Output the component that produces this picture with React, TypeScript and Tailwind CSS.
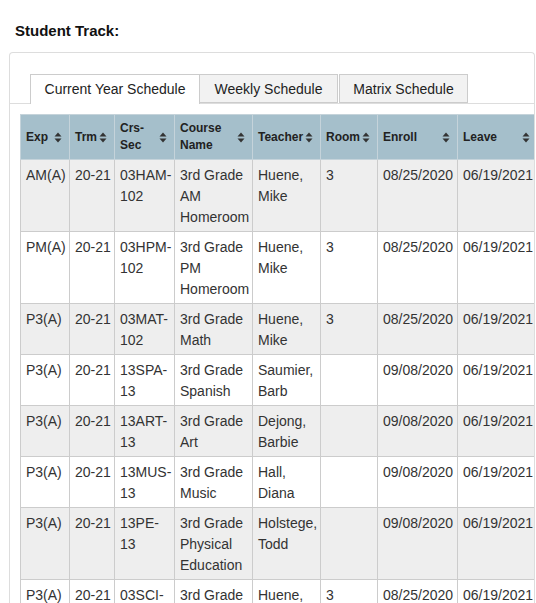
import React from "react";

type Row = {
  exp: string;
  trm: string;
  crs: string;
  course: string;
  teacher: string;
  room: string;
  enroll: string;
  leave: string;
};

const rows: Row[] = [
  { exp: "AM(A)", trm: "20-21", crs: "03HAM-102", course: "3rd Grade AM Homeroom", teacher: "Huene, Mike", room: "3", enroll: "08/25/2020", leave: "06/19/2021" },
  { exp: "PM(A)", trm: "20-21", crs: "03HPM-102", course: "3rd Grade PM Homeroom", teacher: "Huene, Mike", room: "3", enroll: "08/25/2020", leave: "06/19/2021" },
  { exp: "P3(A)", trm: "20-21", crs: "03MAT-102", course: "3rd Grade Math", teacher: "Huene, Mike", room: "3", enroll: "08/25/2020", leave: "06/19/2021" },
  { exp: "P3(A)", trm: "20-21", crs: "13SPA-13", course: "3rd Grade Spanish", teacher: "Saumier, Barb", room: "", enroll: "09/08/2020", leave: "06/19/2021" },
  { exp: "P3(A)", trm: "20-21", crs: "13ART-13", course: "3rd Grade Art", teacher: "Dejong, Barbie", room: "", enroll: "09/08/2020", leave: "06/19/2021" },
  { exp: "P3(A)", trm: "20-21", crs: "13MUS-13", course: "3rd Grade Music", teacher: "Hall, Diana", room: "", enroll: "09/08/2020", leave: "06/19/2021" },
  { exp: "P3(A)", trm: "20-21", crs: "13PE-13", course: "3rd Grade Physical Education", teacher: "Holstege, Todd", room: "", enroll: "09/08/2020", leave: "06/19/2021" },
  { exp: "P3(A)", trm: "20-21", crs: "03SCI-102", course: "3rd Grade Science", teacher: "Huene, Mike", room: "3", enroll: "08/25/2020", leave: "06/19/2021" },
];

function SortIcon() {
  return (
    <svg width="8" height="11" viewBox="0 0 8 11" className="shrink-0">
      <path d="M4 0.5 L7.5 4.5 L0.5 4.5 Z" fill="#333" />
      <path d="M4 10.5 L7.5 6.5 L0.5 6.5 Z" fill="#333" />
    </svg>
  );
}

const headers: { label: React.ReactNode; w: string }[] = [
  { label: "Exp", w: "w-[49px]" },
  { label: "Trm", w: "w-[45px]" },
  { label: "Crs-Sec", w: "w-[60px]" },
  { label: "Course Name", w: "w-[78px]" },
  { label: "Teacher", w: "w-[68px]" },
  { label: "Room", w: "w-[57px]" },
  { label: "Enroll", w: "w-[80px]" },
  { label: "Leave", w: "w-[80px]" },
];

export default function App() {
  const td = "border border-[#cccccc] px-[5px] pt-[5px] pb-[3px] align-top";
  return (
    <div
      className="min-h-[603px] w-[536px] overflow-hidden bg-white text-[#333333]"
      style={{ fontFamily: '"Liberation Sans", Arial, sans-serif' }}
    >
      <div className="pl-[15px] pt-[22px] text-[15px] font-bold leading-[18px] text-[#111111]">
        Student Track:
      </div>
      <div className="ml-[9px] mr-[1px] mt-[12px] h-[560px] overflow-hidden rounded-t-[4px] border border-b-0 border-[#dddddd] pt-[21px]">
        <div className="flex border-b border-[#dddddd] pl-[20px]">
          <div className="-mb-px w-[170px] border border-b-0 border-[#cccccc] bg-white pt-[4px] pb-[4px] text-center text-[14px] leading-[20px] text-[#222222]">
            Current Year Schedule
          </div>
          <div className="w-[138px] border border-l-0 border-[#cccccc] bg-[#f2f2f2] pt-[4px] pb-[3px] text-center text-[14px] leading-[20px] text-[#222222]">
            Weekly Schedule
          </div>
          <div className="ml-px w-[129px] border border-[#cccccc] bg-[#f2f2f2] pt-[4px] pb-[3px] text-center text-[14px] leading-[20px] text-[#222222]">
            Matrix Schedule
          </div>
        </div>
        <div className="ml-[10px] mt-[10px] w-[517px]">
          <table className="w-[517px] table-fixed border-collapse text-[14px] leading-[21px]">
            <thead>
              <tr className="bg-[#a5bfcb]">
                {headers.map((h, i) => (
                  <th
                    key={i}
                    className={`${h.w} h-[44px] border border-[#c5d3da] pl-[5px] pr-[7px] py-[5px] text-left align-middle text-[12px] font-bold leading-[17px] text-[#222222]`}
                  >
                    <div className="flex items-center justify-between gap-[2px]">
                      <span className="min-w-0">{h.label}</span>
                      <SortIcon />
                    </div>
                  </th>
                ))}
              </tr>
            </thead>
            <tbody>
              {rows.map((r, i) => (
                <tr key={i} className={i % 2 === 0 ? "bg-[#eeeeee]" : "bg-white"}>
                  <td className={`${td} whitespace-nowrap`}>{r.exp}</td>
                  <td className={`${td} whitespace-nowrap`}>{r.trm}</td>
                  <td className={td}>{r.crs}</td>
                  <td className={td}>{r.course}</td>
                  <td className={td}>{r.teacher}</td>
                  <td className={td}>{r.room}</td>
                  <td className={`${td} whitespace-nowrap`}>{r.enroll}</td>
                  <td className={`${td} whitespace-nowrap`}>{r.leave}</td>
                </tr>
              ))}
            </tbody>
          </table>
        </div>
      </div>
    </div>
  );
}
